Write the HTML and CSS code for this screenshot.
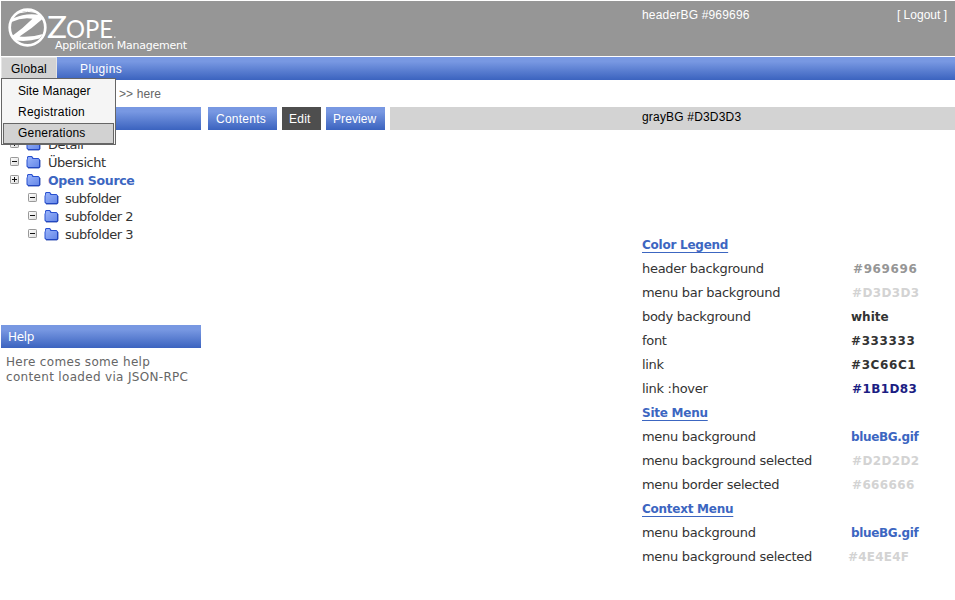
FILE: index.html
```html
<!DOCTYPE html>
<html lang="en">
<head>
<meta charset="utf-8">
<title>Zope Application Management</title>
<link rel="stylesheet" href="styles.css">
</head>
<body>
<svg class="defs" width="0" height="0" aria-hidden="true">
  <defs>
    <linearGradient id="folderFill" x1="0" y1="0" x2="1" y2="1">
      <stop offset="0" stop-color="#9ab4fa"/><stop offset="1" stop-color="#6688e8"/>
    </linearGradient>
    <linearGradient id="boxFill" x1="0" y1="0" x2="1" y2="1">
      <stop offset="0" stop-color="#fff"/><stop offset="1" stop-color="#ddd"/>
    </linearGradient>
    <symbol id="folder" viewBox="0 0 15 13">
      <path d="M1 3 V1 L2 0 H6 L7.5 2 H12.5 L14 3.5 V11 L13 12 H2 L.5 10.5 V4 Z" fill="#2850d0"/>
      <path d="M2 1.5 L2.5 1 H5.5 L6.5 3 H12.5 L13 4 V10.5 L12.5 11 H2.5 L1.5 10 V4 Z" fill="url(#folderFill)"/>
      <path d="M2 12 H13.2 L14 11 V4" fill="none" stroke="#1a3aa8" stroke-width=".8"/>
    </symbol>
    <symbol id="minus" viewBox="0 0 9 9">
      <rect x=".5" y=".5" width="8" height="8" rx=".7" fill="url(#boxFill)" stroke="#999"/>
      <path d="M2 4.5 H7" stroke="#111"/>
    </symbol>
    <symbol id="plus" viewBox="0 0 9 9">
      <rect x=".5" y=".5" width="8" height="8" rx=".7" fill="url(#boxFill)" stroke="#999"/>
      <path d="M2 4.5 H7 M4.5 2 V7" stroke="#111"/>
    </symbol>
  </defs>
</svg>
<header class="header">
  <svg class="logo" width="200" height="55" viewBox="1 1 200 55">
    <circle cx="27.5" cy="27.5" r="17.8" fill="none" stroke="#fff" stroke-width="2.7"/>
    <path d="M12.5 18.5 Q26 12.5 39 14.8 L43 18.5 Q32 28.5 19.5 36.5 Q32 37.5 43 34 L39.5 38.5 Q28 42 16 40.5 L11.5 36.5 Q23 28.5 32.5 18.8 Q22 17 11.5 22 Z" fill="#fff"/>
    <path d="M18 13 Q28 10 37 12.5" fill="none" stroke="#fff" stroke-width="1"/>
    <text class="logo-z" x="47" y="38" textLength="20" lengthAdjust="spacingAndGlyphs">Z</text>
    <text class="logo-ope" x="66" y="38" textLength="47" lengthAdjust="spacingAndGlyphs">OPE</text>
    <rect x="114" y="36.5" width="1.5" height="1.5" fill="#ddd"/>
    <text class="logo-sub" x="55" y="49" textLength="132" lengthAdjust="spacing">Application Management</text>
  </svg>
  <span class="header-note">headerBG #969696</span>
  <a class="logout">[ Logout ]</a>
</header>
<nav class="site-menu">
  <div class="site-item open">Global
    <ul class="dropdown">
      <li>Site Manager</li>
      <li class="w-reg">Registration</li>
      <li class="selected">Generations</li>
    </ul>
  </div>
  <div class="site-item plugins">Plugins</div>
</nav>
<div class="breadcrumb">&gt;&gt; here</div>
<div class="columns">
  <aside class="sidebar">
    <div class="bar"></div>
    <ul class="tree">
      <li><svg class="toggle"><use href="#plus"/></svg><svg class="folder"><use href="#folder"/></svg><span>Detail</span></li>
      <li><svg class="toggle"><use href="#minus"/></svg><svg class="folder"><use href="#folder"/></svg><span>Übersicht</span></li>
      <li><svg class="toggle"><use href="#plus"/></svg><svg class="folder"><use href="#folder"/></svg><span class="t-open">Open Source</span></li>
      <li class="sub"><svg class="toggle"><use href="#minus"/></svg><svg class="folder"><use href="#folder"/></svg><span class="t-sub">subfolder</span></li>
      <li class="sub"><svg class="toggle"><use href="#minus"/></svg><svg class="folder"><use href="#folder"/></svg><span>subfolder 2</span></li>
      <li class="sub"><svg class="toggle"><use href="#minus"/></svg><svg class="folder"><use href="#folder"/></svg><span>subfolder 3</span></li>
    </ul>
    <div class="bar help-title">Help</div>
    <p class="help-text">Here comes some help<br>content loaded via JSON-RPC</p>
  </aside>
  <main class="main">
    <div class="context-menu">
      <div class="tab contents">Contents</div>
      <div class="tab edit">Edit</div>
      <div class="tab preview">Preview</div>
      <div class="gray-bar">grayBG #D3D3D3</div>
    </div>
    <div class="legend">
      <h2>Color Legend</h2>
      <div class="row"><span>header background</span><b class="c-header">#969696</b></div>
      <div class="row"><span>menu bar background</span><b class="c-light">#D3D3D3</b></div>
      <div class="row"><span>body background</span><b class="c-white">white</b></div>
      <div class="row"><span>font</span><b>#333333</b></div>
      <div class="row"><span>link</span><b>#3C66C1</b></div>
      <div class="row"><span>link :hover</span><b class="c-hover">#1B1D83</b></div>
      <h2>Site Menu</h2>
      <div class="row"><span>menu background</span><b class="c-blue">blueBG.gif</b></div>
      <div class="row"><span>menu background selected</span><b class="c-light">#D2D2D2</b></div>
      <div class="row"><span>menu border selected</span><b class="c-light">#666666</b></div>
      <h2>Context Menu</h2>
      <div class="row"><span>menu background</span><b class="c-blue">blueBG.gif</b></div>
      <div class="row"><span>menu background selected</span><b class="c-light c-last">#4E4E4F</b></div>
    </div>
  </main>
</div>
</body>
</html>
```
FILE: styles.css
```css
* { box-sizing: border-box; }
body {
  margin: 0;
  padding: 1px 0 0 1px;
  height: 600px;
  overflow: hidden;
  background: #fff;
  color: #333;
  font-family: "Liberation Sans", Arial, sans-serif;
  font-size: 12px;
}
ul { list-style: none; margin: 0; padding: 0; }
.defs { display: block; }
.header {
  display: grid;
  grid-template-columns: 641px 1fr auto;
  height: 55px;
  background: #969696;
  color: #fff;
  line-height: 28px;
}
.header-note { letter-spacing: .18px; }
.logo { display: block; }
.logo text { fill: #fff; }
.logo-z { font: 30px "Lato", sans-serif; }
.logo-ope { font: 25px "Lato", sans-serif; }
.logo-sub { font: 11px "DejaVu Sans", sans-serif; }
.logout { padding-right: 8px; }
.site-menu {
  display: flex;
  height: 23px;
  margin-top: 1px;
  background: linear-gradient(#7898e2 0 20%, #3b63bf);
  color: #fff;
  letter-spacing: .4px;
}
.site-item { position: relative; line-height: 22px; }
.open {
  width: 56px;
  height: 22px;
  padding-left: 9px;
  border: 1px solid #e4e4e4;
  background: #d2d2d2;
  color: #000;
  line-height: 22px;
  letter-spacing: .2px;
}
.plugins { padding-left: 23px; line-height: 24px; }
.dropdown {
  position: absolute;
  z-index: 2;
  left: -1px;
  top: 20px;
  width: 115px;
  height: 67px;
  padding: 1px;
  border: 1px solid #666;
  background: #f5f5f5;
}
.dropdown li { height: 21px; padding-left: 15px; line-height: 22px; letter-spacing: .1px; }
.dropdown .selected {
  height: 21px;
  margin-top: 1px;
  padding-left: 14px;
  border: 1px solid #666;
  background: #d2d2d2;
  line-height: 18px;
  letter-spacing: .2px;
}
.dropdown .w-reg { letter-spacing: .25px; }
.breadcrumb { height: 27px; padding-left: 118px; line-height: 28px; color: #666; letter-spacing: .1px; }
.columns { display: flex; gap: 7px; }
.sidebar { width: 200px; font-family: "DejaVu Sans", Verdana, sans-serif; }
.bar { height: 23px; background: linear-gradient(#7898e2 0 20%, #3b63bf); }
.tree { height: 195px; padding-top: 5px; font-size: 13px; }
.tree li { display: flex; align-items: center; height: 18px; padding-left: 9px; }
.tree .sub { padding-left: 27px; }
.tree span { letter-spacing: -.5px; }
.toggle { width: 9px; height: 9px; margin: -2px 7px 0 0; }
.folder { width: 15px; height: 13px; margin-right: 7px; }
.sub .folder { margin-right: 6px; }
.tree .t-open { color: #3c66c1; font-weight: bold; font-size: 12.5px; letter-spacing: -.3px; line-height: 18px; padding-top: 1px; }
.tree .t-sub { letter-spacing: -.6px; }
.help-title { padding-left: 7px; color: #fff; line-height: 24px; letter-spacing: -.3px; }
.help-text { margin: 7px 0 0 5px; color: #666; line-height: 15px; white-space: nowrap; letter-spacing: .32px; }
.main { flex: 1; }
.context-menu { display: flex; gap: 5px; height: 23px; line-height: 24px; }
.tab {
  padding-left: 8px;
  background: linear-gradient(#7898e2 0 20%, #3b63bf);
  color: #fff;
  letter-spacing: .25px;
}
.contents { width: 69px; }
.edit { width: 39px; padding-left: 7px; background: #4e4e4e; }
.preview { width: 59px; padding-left: 7px; letter-spacing: .1px; }
.gray-bar { flex: 1; padding-left: 252px; background: #d3d3d3; color: #000; line-height: 20px; letter-spacing: .18px; }
.legend {
  margin: 103px 0 0 434px;
  color: #333;
  font-family: "DejaVu Sans", Verdana, sans-serif;
  font-size: 13px;
}
.legend h2 {
  margin: 0;
  height: 24px;
  font-size: 12px;
  line-height: 24px;
  color: #3c66c1;
  text-decoration: underline;
  text-decoration-color: #3c66c1;
  text-decoration-thickness: 1px;
  text-decoration-skip-ink: none;
  text-underline-offset: 3px;
  letter-spacing: -.25px;
}
.row { display: grid; grid-template-columns: 209px 1fr; height: 24px; line-height: 24px; letter-spacing: -.3px; }
.row b { font-size: 12px; letter-spacing: .6px; }
.row .c-header { padding-left: 2px; color: #969696; }
.row .c-light { padding-left: 1px; color: #d3d3d3; letter-spacing: .35px; }
.row .c-last { padding-left: 0; margin-left: -3px; letter-spacing: .2px; }
.row .c-hover { padding-left: 1px; color: #1b1d83; letter-spacing: .4px; }
.row .c-blue { color: #3c66c1; letter-spacing: -.35px; }
.row .c-white { letter-spacing: 0; }
```
